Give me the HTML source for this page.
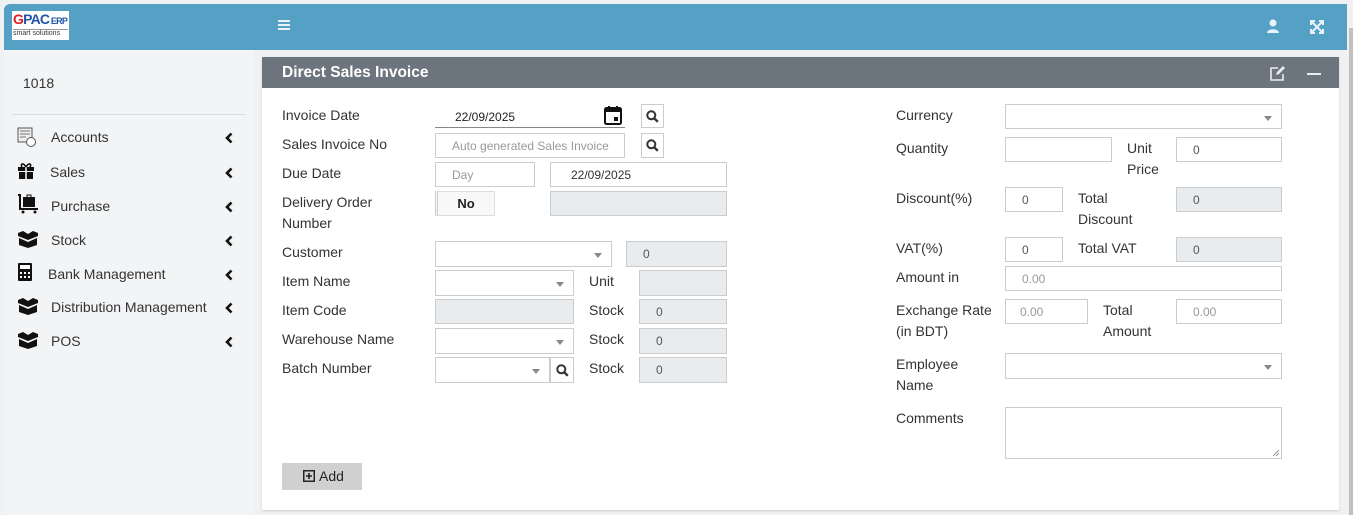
<!DOCTYPE html>
<html><head><meta charset="utf-8"><style>
*{box-sizing:border-box;margin:0;padding:0}
body{width:1353px;height:515px;overflow:hidden;background:#f0f1f3;font-family:"Liberation Sans",sans-serif;position:relative}
.a{position:absolute}
.lbl{position:absolute;font-size:14px;color:#333;line-height:21px}
.in{position:absolute;border:1px solid #ccc;background:#fff;font-size:12px;color:#555;padding-left:16px;display:flex;align-items:center}
.g{background:#e9ecef;border-color:#ccc}
.ph{color:#999}
.sel::after{content:"";position:absolute;right:9px;top:11px;border-left:4px solid transparent;border-right:4px solid transparent;border-top:5px solid #888}
.sb{position:absolute;border:1px solid #ccc;background:#fff;display:flex;align-items:center;justify-content:center}
.mi{position:absolute;left:0;width:250px;height:30px;font-size:14px;color:#333}
.mi span{position:absolute;top:0;line-height:20px}
.mi .ch{position:absolute;left:225px;top:5px}
</style></head><body>
<!-- sidebar -->
<div class="a" style="left:4px;top:4px;width:250px;height:511px;background:#f3f4f6"></div>
<div class="a" style="left:4px;top:4px;width:250px;height:46px;background:#55a0c5;border-radius:6px 0 0 0"></div>
<div class="a" style="left:12px;top:11px;width:57px;height:29px;background:#fff;">
<div class="a" style="left:1px;top:1px;font-size:14px;font-weight:bold;color:#d22;letter-spacing:-.8px;line-height:15px">G<span style="color:#2254a8">PAC</span><span style="color:#2254a8;font-size:9px"> ERP</span></div>
<div class="a" style="left:1px;top:18px;font-size:7px;color:#333;line-height:8px;border-top:1px solid #999;width:55px">smart solutions</div></div>
<div class="a" style="left:23px;top:75px;font-size:14px;color:#333">1018</div>
<div class="a" style="left:12px;top:114px;width:234px;height:1px;background:#ddd"></div>
<div class="mi" style="top:127px"><svg class="a" style="left:17px;top:0" width="20" height="20" viewBox="0 0 20 20"><rect x="1" y="1" width="14" height="14" fill="#eee" stroke="#555"/><path d="M3 4h10M3 7h10M3 10h6" stroke="#777"/><circle cx="14" cy="15" r="4.5" fill="#fff" stroke="#555"/></svg><span style="left:51px">Accounts</span><svg class="ch" width="8" height="12" viewBox="0 0 8 12"><path d="M6.5 1.5L2 6l4.5 4.5" stroke="#111" stroke-width="2.6" fill="none"/></svg></div>
<div class="mi" style="top:162px"><svg class="a" style="left:17px;top:0" width="18" height="18" viewBox="0 0 18 18"><path d="M1 5h16v4H1zM2 10h14v7H2z" fill="#111"/><path d="M9 5v12" stroke="#fff" stroke-width="1.5"/><path d="M9 5C6 0 3 2 5 5M9 5c3-5 6-3 4 0" stroke="#111" stroke-width="1.6" fill="none"/></svg><span style="left:50px">Sales</span><svg class="ch" width="8" height="12" viewBox="0 0 8 12"><path d="M6.5 1.5L2 6l4.5 4.5" stroke="#111" stroke-width="2.6" fill="none"/></svg></div>
<div class="mi" style="top:196px"><svg class="a" style="left:17px;top:-2px" width="22" height="20" viewBox="0 0 22 20"><path d="M1 1h2v14h18" stroke="#111" stroke-width="2" fill="none"/><rect x="6" y="3" width="12" height="10" fill="#111"/><path d="M10 3V1h4v2" stroke="#111" fill="none"/><circle cx="6" cy="18" r="1.5" fill="#111"/><circle cx="18" cy="18" r="1.5" fill="#111"/></svg><span style="left:51px">Purchase</span><svg class="ch" width="8" height="12" viewBox="0 0 8 12"><path d="M6.5 1.5L2 6l4.5 4.5" stroke="#111" stroke-width="2.6" fill="none"/></svg></div>
<div class="mi" style="top:230px"><svg class="a" style="left:17px;top:0" width="22" height="18" viewBox="0 0 22 18"><path d="M1 3l5-2 5 3 5-3 5 2v3l-10 4L1 6z M2 8l9 4 9-4v7l-9 3-9-3z" fill="#111"/></svg><span style="left:51px">Stock</span><svg class="ch" width="8" height="12" viewBox="0 0 8 12"><path d="M6.5 1.5L2 6l4.5 4.5" stroke="#111" stroke-width="2.6" fill="none"/></svg></div>
<div class="mi" style="top:264px"><svg class="a" style="left:17px;top:-2px" width="16" height="20" viewBox="0 0 16 20"><rect x="1" y="1" width="14" height="18" rx="1" fill="#111"/><rect x="3" y="3" width="10" height="4" fill="#fff"/><path d="M3 10h2v2H3zM7 10h2v2H7zM11 10h2v2h-2zM3 14h2v2H3zM7 14h2v2H7zM11 14h2v2h-2z" fill="#fff"/></svg><span style="left:48px">Bank Management</span><svg class="ch" width="8" height="12" viewBox="0 0 8 12"><path d="M6.5 1.5L2 6l4.5 4.5" stroke="#111" stroke-width="2.6" fill="none"/></svg></div>
<div class="mi" style="top:297px"><svg class="a" style="left:17px;top:0" width="22" height="18" viewBox="0 0 22 18"><path d="M1 3l5-2 5 3 5-3 5 2v3l-10 4L1 6z M2 8l9 4 9-4v7l-9 3-9-3z" fill="#111"/></svg><span style="left:51px">Distribution Management</span><svg class="ch" width="8" height="12" viewBox="0 0 8 12"><path d="M6.5 1.5L2 6l4.5 4.5" stroke="#111" stroke-width="2.6" fill="none"/></svg></div>
<div class="mi" style="top:331px"><svg class="a" style="left:17px;top:0" width="22" height="18" viewBox="0 0 22 18"><path d="M1 3l5-2 5 3 5-3 5 2v3l-10 4L1 6z M2 8l9 4 9-4v7l-9 3-9-3z" fill="#111"/></svg><span style="left:51px">POS</span><svg class="ch" width="8" height="12" viewBox="0 0 8 12"><path d="M6.5 1.5L2 6l4.5 4.5" stroke="#111" stroke-width="2.6" fill="none"/></svg></div>
<!-- topbar -->
<div class="a" style="left:254px;top:4px;width:1093px;height:46px;background:#55a0c5"></div>
<div class="a" style="left:278px;top:20px;width:12px;height:2px;background:#e8f2f8;box-shadow:0 4px 0 #e8f2f8,0 8px 0 #e8f2f8"></div>
<svg class="a" style="left:1266px;top:19px" width="14" height="15" viewBox="0 0 14 15"><circle cx="7" cy="4" r="3.5" fill="#e8f2f8"/><path d="M1 14c0-5 12-5 12 0z" fill="#e8f2f8"/></svg>
<svg class="a" style="left:1310px;top:20px" width="14" height="14" viewBox="0 0 14 14" stroke="#e8f2f8" stroke-width="2" fill="none"><path d="M2 2l10 10M12 2L2 12"/><path d="M1 5V1h4M9 1h4v4M13 9v4H9M5 13H1V9"/></svg>
<div class="a" style="left:1347px;top:0;width:6px;height:515px;background:#f0f0f0"></div>
<div class="a" style="left:1349px;top:28px;width:4px;height:487px;background:#c1c1c1"></div>
<!-- panel -->
<div class="a" style="left:262px;top:57px;width:1077px;height:453px;background:#fff;box-shadow:0 1px 2px #ccc"></div>
<div class="a" style="left:262px;top:57px;width:1077px;height:31px;background:#6c757d"></div>
<div class="a" style="left:282px;top:63px;font-size:15.5px;font-weight:bold;color:#fff;line-height:20px">Direct Sales Invoice</div>
<svg class="a" style="left:1270px;top:66px" width="16" height="15" viewBox="0 0 16 15"><path d="M8 2H1v12h12V8" stroke="#e9ecef" stroke-width="1.6" fill="none"/><path d="M6 9l1-3 6-6 2 2-6 6z" fill="#e9ecef"/></svg>
<div class="a" style="left:1307px;top:73px;width:14px;height:2px;background:#e9ecef"></div>
<!-- left form -->
<div class="lbl" style="left:282px;top:105px">Invoice Date</div>
<div class="a" style="left:435px;top:104px;width:190px;height:24px;border-bottom:1px solid #888;font-size:12px;color:#222;padding:6px 0 0 20px">22/09/2025</div>
<svg class="a" style="left:604px;top:105px" width="18" height="20" viewBox="0 0 18 20"><rect x="1" y="3" width="16" height="16" rx="1.5" fill="none" stroke="#111" stroke-width="2"/><rect x="1" y="3" width="16" height="4" fill="#111"/><path d="M5 1v3M13 1v3" stroke="#111" stroke-width="2"/><rect x="10" y="12" width="4" height="4" fill="#111"/></svg>
<div class="sb" style="left:641px;top:104px;width:23px;height:24px"><svg width="13" height="13" viewBox="0 0 13 13"><circle cx="5.3" cy="5.3" r="4" stroke="#333" stroke-width="2" fill="none"/><path d="M8.3 8.3l3.5 3.5" stroke="#333" stroke-width="2.4"/></svg></div>
<div class="lbl" style="left:282px;top:134px">Sales Invoice No</div>
<div class="in ph" style="left:435px;top:133px;width:190px;height:25px">Auto generated Sales Invoice</div>
<div class="sb" style="left:641px;top:133px;width:23px;height:25px"><svg width="13" height="13" viewBox="0 0 13 13"><circle cx="5.3" cy="5.3" r="4" stroke="#333" stroke-width="2" fill="none"/><path d="M8.3 8.3l3.5 3.5" stroke="#333" stroke-width="2.4"/></svg></div>
<div class="lbl" style="left:282px;top:163px">Due Date</div>
<div class="in ph" style="left:435px;top:162px;width:100px;height:25px">Day</div>
<div class="in" style="left:550px;top:162px;width:177px;height:25px;color:#333;padding-left:20px">22/09/2025</div>
<div class="lbl" style="left:282px;top:192px">Delivery Order<br>Number</div>
<div class="a" style="left:435px;top:191px;width:60px;height:25px;border:1px solid #ddd;border-left:3px double #ccc;background:#f8f8f8;font-size:13px;font-weight:bold;color:#222;text-align:center;line-height:23px">No</div>
<div class="in g" style="left:550px;top:191px;width:177px;height:25px"></div>
<div class="lbl" style="left:282px;top:242px">Customer</div>
<div class="in sel" style="left:435px;top:241px;width:177px;height:26px"></div>
<div class="in g" style="left:626px;top:241px;width:101px;height:26px">0</div>
<div class="lbl" style="left:282px;top:271px">Item Name</div>
<div class="in sel" style="left:435px;top:270px;width:139px;height:26px"></div>
<div class="lbl" style="left:589px;top:271px">Unit</div>
<div class="in g" style="left:639px;top:270px;width:88px;height:26px"></div>
<div class="lbl" style="left:282px;top:300px">Item Code</div>
<div class="in g" style="left:435px;top:299px;width:139px;height:25px"></div>
<div class="lbl" style="left:589px;top:300px">Stock</div>
<div class="in g" style="left:639px;top:299px;width:88px;height:25px">0</div>
<div class="lbl" style="left:282px;top:329px">Warehouse Name</div>
<div class="in sel" style="left:435px;top:328px;width:139px;height:26px"></div>
<div class="lbl" style="left:589px;top:329px">Stock</div>
<div class="in g" style="left:639px;top:328px;width:88px;height:26px">0</div>
<div class="lbl" style="left:282px;top:358px">Batch Number</div>
<div class="in sel" style="left:435px;top:357px;width:115px;height:26px"></div>
<div class="sb" style="left:550px;top:357px;width:24px;height:26px"><svg width="13" height="13" viewBox="0 0 13 13"><circle cx="5.3" cy="5.3" r="4" stroke="#333" stroke-width="2" fill="none"/><path d="M8.3 8.3l3.5 3.5" stroke="#333" stroke-width="2.4"/></svg></div>
<div class="lbl" style="left:589px;top:358px">Stock</div>
<div class="in g" style="left:639px;top:357px;width:88px;height:26px">0</div>
<div class="a" style="left:282px;top:463px;width:80px;height:27px;background:#d0d0d0;font-size:14px;color:#222;line-height:27px;padding-left:37px">Add</div>
<svg class="a" style="left:303px;top:470px" width="12" height="12" viewBox="0 0 12 12"><rect x="0.75" y="0.75" width="10.5" height="10.5" fill="none" stroke="#222" stroke-width="1.5"/><path d="M6 3v6M3 6h6" stroke="#222" stroke-width="1.6"/></svg>
<!-- right form -->
<div class="lbl" style="left:896px;top:105px">Currency</div>
<div class="in sel" style="left:1005px;top:104px;width:277px;height:25px"></div>
<div class="lbl" style="left:896px;top:138px">Quantity</div>
<div class="in" style="left:1005px;top:137px;width:107px;height:25px"></div>
<div class="lbl" style="left:1127px;top:138px">Unit<br>Price</div>
<div class="in" style="left:1176px;top:137px;width:106px;height:25px">0</div>
<div class="lbl" style="left:896px;top:188px">Discount(%)</div>
<div class="in" style="left:1005px;top:187px;width:58px;height:25px">0</div>
<div class="lbl" style="left:1078px;top:188px">Total<br>Discount</div>
<div class="in g" style="left:1176px;top:187px;width:106px;height:25px">0</div>
<div class="lbl" style="left:896px;top:238px">VAT(%)</div>
<div class="in" style="left:1005px;top:237px;width:58px;height:25px">0</div>
<div class="lbl" style="left:1078px;top:238px">Total VAT</div>
<div class="in g" style="left:1176px;top:237px;width:106px;height:25px">0</div>
<div class="lbl" style="left:896px;top:267px">Amount in</div>
<div class="in ph" style="left:1005px;top:266px;width:277px;height:25px">0.00</div>
<div class="lbl" style="left:896px;top:300px">Exchange Rate<br>(in BDT)</div>
<div class="in ph" style="left:1005px;top:299px;width:83px;height:25px;padding-left:14px">0.00</div>
<div class="lbl" style="left:1103px;top:300px">Total<br>Amount</div>
<div class="in ph" style="left:1176px;top:299px;width:106px;height:25px">0.00</div>
<div class="lbl" style="left:896px;top:354px">Employee<br>Name</div>
<div class="in sel" style="left:1005px;top:353px;width:277px;height:26px"></div>
<div class="lbl" style="left:896px;top:408px">Comments</div>
<div class="in" style="left:1005px;top:407px;width:277px;height:52px"></div>
<svg class="a" style="left:1272px;top:449px" width="8" height="8"><path d="M7 1L1 7M7 4L4 7" stroke="#999"/></svg>
</body></html>
